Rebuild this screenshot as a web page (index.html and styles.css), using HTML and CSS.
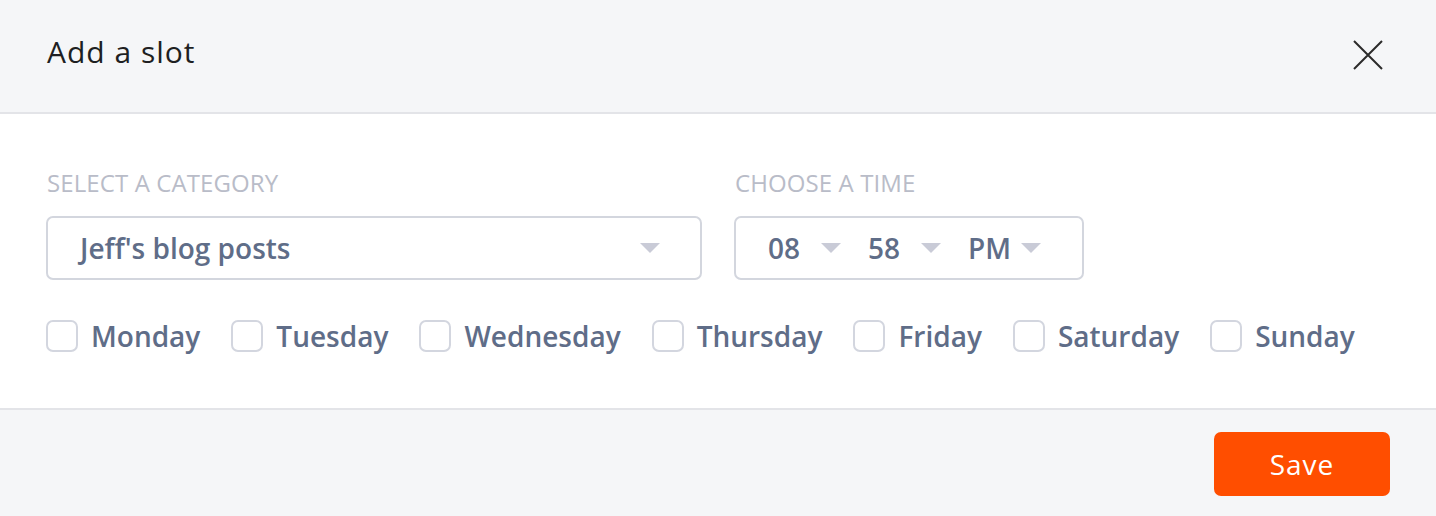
FILE: index.html
```html
<!DOCTYPE html>
<html lang="en">
<head>
<meta charset="utf-8">
<title>Add a slot</title>
<link rel="stylesheet" href="styles.css">
</head>
<body>
<div class="modal">
  <header class="modal-header">
    <h1 class="modal-title">Add a slot</h1>
    <button class="close-btn" aria-label="Close">
      <svg width="30" height="30" viewBox="0 0 30 30"><path d="M1 1 L29 29 M29 1 L1 29" stroke="#2b2b2b" stroke-width="2" fill="none"/></svg>
    </button>
  </header>
  <section class="modal-body">
    <div class="fields">
      <div class="field field-category">
        <div class="field-label">SELECT A CATEGORY</div>
        <div class="select-box">
          <span class="select-value">Jeff's blog posts</span>
          <svg class="caret" width="20" height="10" viewBox="0 0 20 10"><polygon points="0,0 20,0 10,10" fill="#c9cbd7"/></svg>
        </div>
      </div>
      <div class="field field-time">
        <div class="field-label">CHOOSE A TIME</div>
        <div class="time-box">
          <div class="time-seg"><span>08</span><svg class="caret" width="20" height="10" viewBox="0 0 20 10"><polygon points="0,0 20,0 10,10" fill="#c9cbd7"/></svg></div>
          <div class="time-seg"><span>58</span><svg class="caret" width="20" height="10" viewBox="0 0 20 10"><polygon points="0,0 20,0 10,10" fill="#c9cbd7"/></svg></div>
          <div class="time-seg"><span>PM</span><svg class="caret" width="20" height="10" viewBox="0 0 20 10"><polygon points="0,0 20,0 10,10" fill="#c9cbd7"/></svg></div>
        </div>
      </div>
    </div>
    <div class="days">
      <label class="day"><span class="checkbox"></span><span class="day-name">Monday</span></label>
      <label class="day"><span class="checkbox"></span><span class="day-name">Tuesday</span></label>
      <label class="day"><span class="checkbox"></span><span class="day-name">Wednesday</span></label>
      <label class="day"><span class="checkbox"></span><span class="day-name">Thursday</span></label>
      <label class="day"><span class="checkbox"></span><span class="day-name">Friday</span></label>
      <label class="day"><span class="checkbox"></span><span class="day-name">Saturday</span></label>
      <label class="day"><span class="checkbox"></span><span class="day-name">Sunday</span></label>
    </div>
  </section>
  <footer class="modal-footer">
    <button class="save-btn">Save</button>
  </footer>
</div>
</body>
</html>
```
FILE: styles.css
```css
html, body {
  margin: 0;
  padding: 0;
  overflow: hidden;
}
body {
  font-family: "Open Sans", "Liberation Sans", sans-serif;
  background: #ffffff;
}
.modal {
  width: 1436px;
  display: flex;
  flex-direction: column;
}
.modal-header {
  box-sizing: border-box;
  height: 114px;
  background: #f5f6f8;
  border-bottom: 2px solid #e3e4e8;
  display: flex;
  align-items: center;
  justify-content: space-between;
  padding: 0 53px 2px 47px;
}
.modal-title {
  margin: 0 0 6px 0;
  font-size: 30px;
  line-height: 40px;
  font-weight: 500;
  letter-spacing: 1px;
  color: #1e1f22;
}
.close-btn {
  border: 0;
  background: transparent;
  padding: 0;
  width: 30px;
  height: 30px;
  display: flex;
  cursor: pointer;
}
.modal-body {
  box-sizing: border-box;
  height: 296px;
  padding: 53px 46px 0 46px;
  border-bottom: 2px solid #e3e4e8;
}
.fields {
  display: flex;
  gap: 32px;
}
.field-label {
  font-size: 24px;
  line-height: 32px;
  color: #b9bcc8;
  letter-spacing: 0.1px;
  margin-bottom: 17px;
  padding-left: 1px;
}
.select-box {
  box-sizing: border-box;
  width: 656px;
  height: 64px;
  border: 2px solid #d3d6de;
  border-radius: 7px;
  display: flex;
  align-items: center;
  justify-content: space-between;
  padding: 0 40px 0 32px;
}
.select-value, .time-seg span {
  font-size: 28px;
  font-weight: 600;
  color: #5f6d88;
  line-height: 38px;
}
.caret {
  display: block;
  flex-shrink: 0;
}
.time-box {
  box-sizing: border-box;
  width: 350px;
  height: 64px;
  border: 2px solid #d3d6de;
  border-radius: 7px;
  display: flex;
  align-items: center;
  gap: 27px;
  padding: 0 0 0 32px;
}
.time-seg {
  width: 73px;
  display: flex;
  align-items: center;
  justify-content: space-between;
}
.days {
  display: flex;
  align-items: center;
  gap: 31px;
  margin-top: 40px;
}
.day {
  display: flex;
  align-items: center;
  gap: 13px;
}
.checkbox {
  box-sizing: border-box;
  width: 32px;
  height: 32px;
  border: 2px solid #d3d6df;
  border-radius: 7px;
  background: #fff;
}
.day-name {
  font-size: 28px;
  font-weight: 600;
  color: #5f6d88;
  line-height: 32px;
}
.modal-footer {
  box-sizing: border-box;
  height: 106px;
  background: #f5f6f8;
  display: flex;
  justify-content: flex-end;
  align-items: flex-start;
  padding: 22px 46px 0 0;
}
.save-btn {
  width: 176px;
  height: 64px;
  border: 0;
  border-radius: 7px;
  background: #ff4e00;
  color: #ffffff;
  font-family: "Open Sans", "Liberation Sans", sans-serif;
  font-size: 28px;
  font-weight: 500;
  letter-spacing: 1px;
  cursor: pointer;
}
```
